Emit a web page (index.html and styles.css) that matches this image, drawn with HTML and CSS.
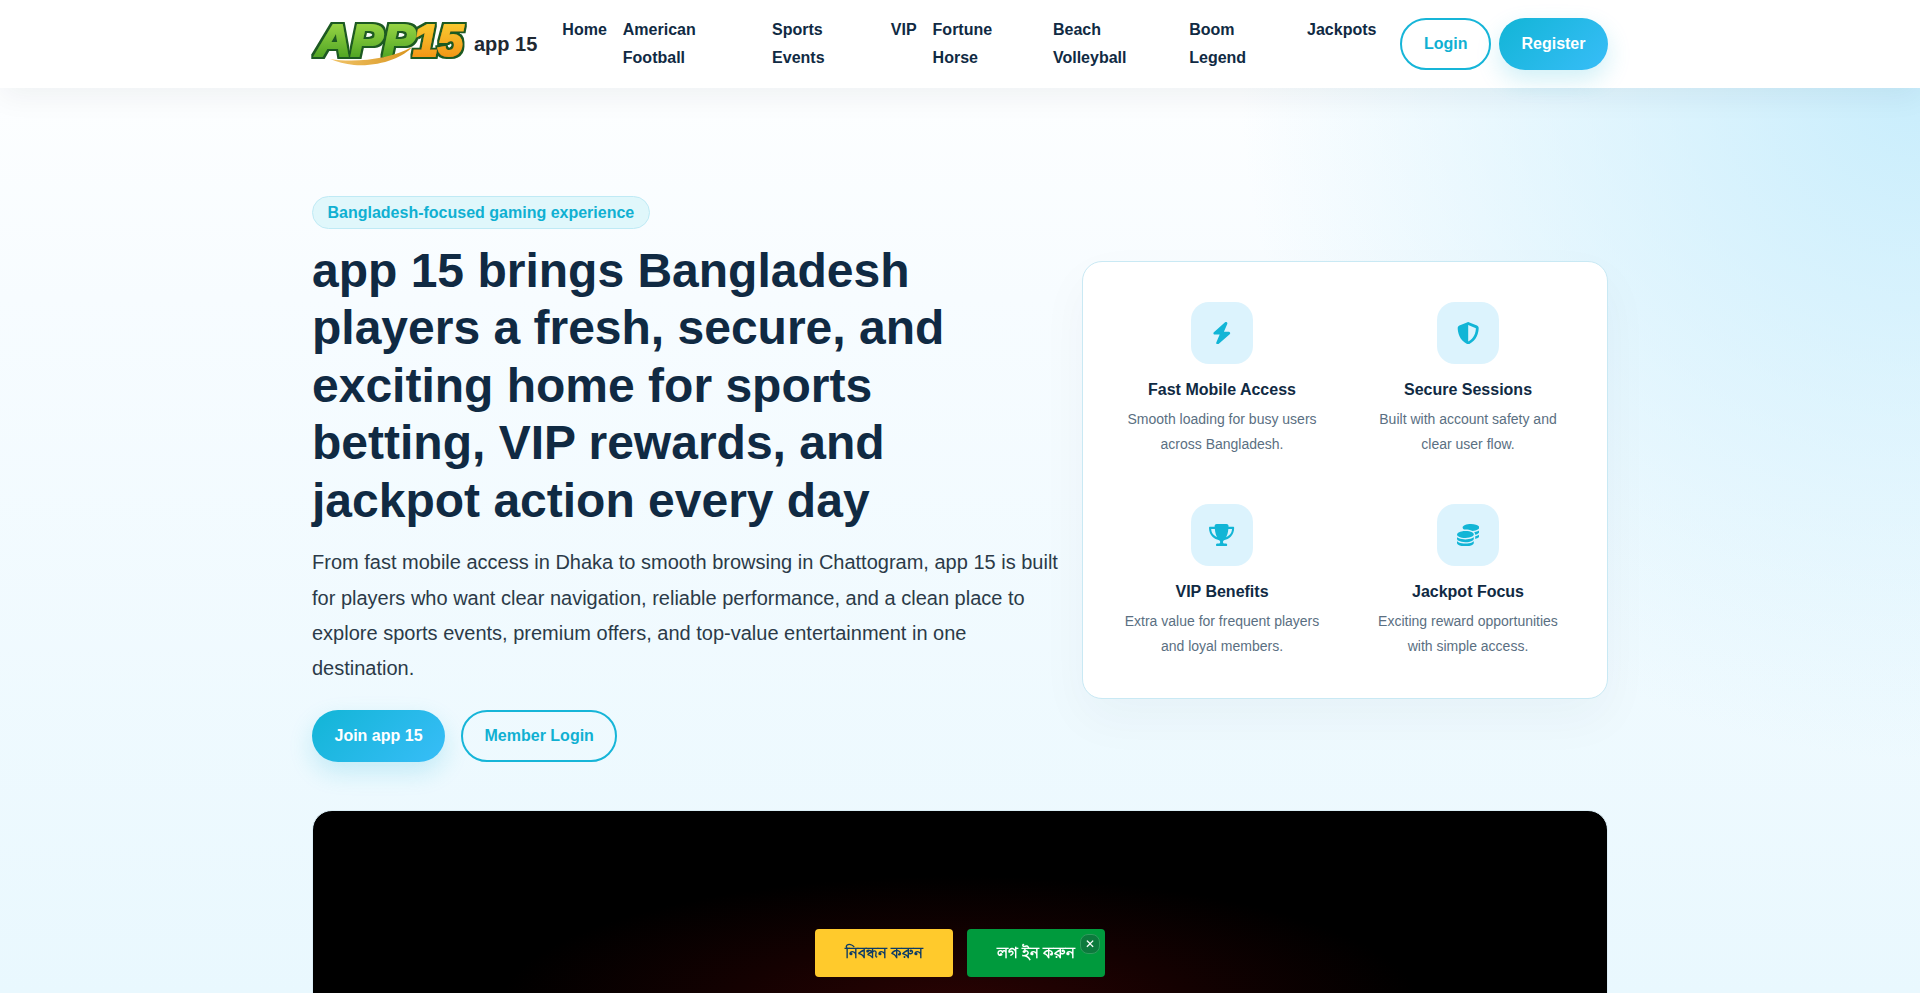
FILE: index.html
```html
<!DOCTYPE html>
<html lang="en">
<head>
  <meta charset="UTF-8" />
  <meta name="viewport" content="width=device-width, initial-scale=1.0"/>
  <title>app 15</title>
  <link rel="stylesheet" href="styles.css">
</head>
<body>
  <header class="site-header">
    <div class="container header-row">
      <a class="brand" href="#">
        <svg class="brand-logo" viewBox="0 0 154 44" width="154" height="44">
          <defs>
            <linearGradient id="logo-green" x1="0" y1="0" x2="0" y2="1">
              <stop offset="0" stop-color="#a8e04c"/>
              <stop offset="1" stop-color="#3f9a1c"/>
            </linearGradient>
            <linearGradient id="logo-orange" x1="0" y1="0" x2="0" y2="1">
              <stop offset="0" stop-color="#fbd636"/>
              <stop offset="1" stop-color="#f18a10"/>
            </linearGradient>
            <linearGradient id="logo-swoosh" x1="0" y1="0" x2="1" y2="0">
              <stop offset="0" stop-color="#f0c46a"/>
              <stop offset="1" stop-color="#d9951e"/>
            </linearGradient>
            <filter id="logo-outline" x="-5%" y="-10%" width="110%" height="120%">
              <feMorphology in="SourceAlpha" operator="dilate" radius="1.6" result="fat"/>
              <feFlood flood-color="#1d5a20"/>
              <feComposite in2="fat" operator="in" result="edge"/>
              <feMerge>
                <feMergeNode in="edge"/>
                <feMergeNode in="SourceGraphic"/>
              </feMerge>
            </filter>
          </defs>
          <g filter="url(#logo-outline)">
            <text class="logo-letters" x="4" y="34" fill="url(#logo-green)" stroke="url(#logo-green)" textLength="99" lengthAdjust="spacingAndGlyphs">APP</text>
            <text class="logo-letters" x="101" y="34" fill="url(#logo-orange)" stroke="url(#logo-orange)" textLength="50" lengthAdjust="spacingAndGlyphs">15</text>
          </g>
          <path d="M18 37 C45 41 78 37 100 25 C92 35 68 45 42 43 C33 42 25 40 18 37 Z" fill="url(#logo-swoosh)"/>
        </svg>
        <span>app 15</span>
      </a>
      <nav class="main-nav">
        <a href="#">Home</a>
        <a href="#">American Football</a>
        <a href="#">Sports Events</a>
        <a href="#">VIP</a>
        <a href="#">Fortune Horse</a>
        <a href="#">Beach Volleyball</a>
        <a href="#">Boom Legend</a>
        <a href="#">Jackpots</a>
      </nav>
      <div class="header-actions">
        <a class="btn btn-outline" href="#">Login</a>
        <a class="btn btn-solid" href="#">Register</a>
      </div>
    </div>
  </header>

  <main class="container">
    <section class="hero">
      <div class="hero-copy">
        <span class="hero-badge">Bangladesh-focused gaming experience</span>
        <h1>app 15 brings Bangladesh players a fresh, secure, and exciting home for sports betting, VIP rewards, and jackpot action every day</h1>
        <p>From fast mobile access in Dhaka to smooth browsing in Chattogram, app 15 is built for players who want clear navigation, reliable performance, and a clean place to explore sports events, premium offers, and top-value entertainment in one destination.</p>
        <div class="hero-actions">
          <a class="btn btn-solid" href="#">Join app 15</a>
          <a class="btn btn-outline" href="#">Member Login</a>
        </div>
      </div>

      <div class="feature-card">
        <div class="feature">
          <div class="feature-icon">
            <svg viewBox="0 0 448 512"><path d="M349.4 44.6c5.9-13.7 1.5-29.7-10.6-38.5s-28.6-8-39.9 1.8l-256 224c-10 8.8-13.6 22.9-8.9 35.3S50.7 288 64 288H175.5L98.6 467.4c-5.9 13.7-1.5 29.7 10.6 38.5s28.6 8 39.9-1.8l256-224c10-8.8 13.6-22.9 8.9-35.3s-16.6-20.7-30-20.7H272.5L349.4 44.6z"/></svg>
          </div>
          <h3>Fast Mobile Access</h3>
          <p>Smooth loading for busy users across Bangladesh.</p>
        </div>
        <div class="feature">
          <div class="feature-icon">
            <svg viewBox="0 0 512 512"><path d="M256 0c4.6 0 9.2 1 13.4 2.9L457.7 82.8c22 9.3 38.4 31 38.3 57.2c-.5 99.2-41.3 280.7-213.6 363.2c-16.7 8-36.1 8-52.8 0C57.3 420.7 16.5 239.2 16 140c-.1-26.2 16.3-47.9 38.3-57.2L242.7 2.9C246.8 1 251.4 0 256 0zm0 66.8V444.8C394 378 431.1 230.1 432 141.4L256 66.8l0 0z"/></svg>
          </div>
          <h3>Secure Sessions</h3>
          <p>Built with account safety and clear user flow.</p>
        </div>
        <div class="feature">
          <div class="feature-icon">
            <svg viewBox="0 0 576 512"><path d="M400 0H176c-26.5 0-48.1 21.8-47.1 48.2c.2 5.3 .4 10.6 .7 15.8H24C10.7 64 0 74.7 0 88c0 92.6 33.5 157 78.5 200.7c44.3 43.1 98.3 64.8 138.1 75.8c23.4 6.5 39.4 26 39.4 45.6c0 20.9-17 37.9-37.9 37.9H192c-17.7 0-32 14.3-32 32s14.3 32 32 32H384c17.7 0 32-14.3 32-32s-14.3-32-32-32H357.9C337 448 320 431 320 410.1c0-19.6 15.9-39.2 39.4-45.6c39.9-11 93.9-32.7 138.2-75.8C542.5 245 576 180.6 576 88c0-13.3-10.7-24-24-24H446.4c.3-5.2 .5-10.4 .7-15.8C448.1 21.8 426.5 0 400 0zM48.9 112h84.4c9.1 90.1 29.2 150.3 51.9 190.6c-24.9-11-50.8-26.5-73.2-48.3c-32-31.1-58-76-63-142.3zM464.1 254.3c-22.4 21.8-48.3 37.3-73.2 48.3c22.7-40.3 42.8-100.5 51.9-190.6h84.4c-5.1 66.3-31.1 111.2-63 142.3z"/></svg>
          </div>
          <h3>VIP Benefits</h3>
          <p>Extra value for frequent players and loyal members.</p>
        </div>
        <div class="feature">
          <div class="feature-icon">
            <svg viewBox="0 0 512 512"><path d="M512 80c0 18-14.3 34.6-38.4 48c-29.1 16.1-72.5 27.5-122.3 30.9c-3.7-1.8-7.4-3.5-11.3-5C300.6 137.4 248.2 128 192 128c-8.3 0-16.4 .2-24.5 .6l-1.1-.6C142.3 114.6 128 98 128 80c0-44.2 86-80 192-80S512 35.8 512 80zM160.7 161.1c10.2-.7 20.7-1.1 31.3-1.1c62.2 0 117.4 12.3 152.5 31.4C369.3 204.9 384 221.7 384 240c0 4-.7 7.9-2.1 11.7c-4.6 13.2-17 25.3-35 35.5c0 0 0 0 0 0c-.1 .1-.3 .1-.4 .2l0 0 0 0c-.3 .2-.6 .3-.9 .5c-35 19.4-90.8 32-153.6 32c-59.6 0-112.9-11.3-148.2-29.1c-1.9-.9-3.7-1.9-5.5-2.9C14.3 274.6 0 258 0 240c0-34.8 53.4-64.5 128-75.4c10.5-1.5 21.4-2.7 32.7-3.5zM416 240c0-21.9-10.6-39.9-24.1-53.4c28.3-4.4 54.2-11.4 76.2-20.5c16.3-6.8 31.5-15.2 43.9-25.5V176c0 19.3-16.5 37.1-43.8 50.9c-14.6 7.4-32.4 13.7-52.4 18.5c.1-1.8 .2-3.5 .2-5.3zm-32 96c0 18-14.3 34.6-38.4 48c-1.8 1-3.6 1.9-5.5 2.9C304.9 404.7 251.6 416 192 416c-62.8 0-118.6-12.6-153.6-32C14.3 370.6 0 354 0 336V300.6c12.5 10.3 27.6 18.7 43.9 25.5C83.4 342.6 135.8 352 192 352s108.6-9.4 148.1-25.9c7.8-3.2 15.3-6.9 22.4-10.9c6.1-3.4 11.8-7.2 17.2-11.2c1.5-1.1 2.9-2.3 4.3-3.4V304v5.7V336zm32 0V304 278.1c19-4.2 36.5-9.5 52.1-16c16.3-6.8 31.5-15.2 43.9-25.5V272c0 10.5-5 21-14.9 30.9c-16.3 16.3-45 29.7-81.3 38.4c.1-1.7 .2-3.5 .2-5.3zM192 448c56.2 0 108.6-9.4 148.1-25.9c16.3-6.8 31.5-15.2 43.9-25.5V432c0 44.2-86 80-192 80S0 476.2 0 432V396.6c12.5 10.3 27.6 18.7 43.9 25.5C83.4 438.6 135.8 448 192 448z"/></svg>
          </div>
          <h3>Jackpot Focus</h3>
          <p>Exciting reward opportunities with simple access.</p>
        </div>
      </div>
    </section>

    <section class="video-frame"></section>
  </main>

  <div class="sticky-cta">
    <a class="cta cta-register" href="#">নিবন্ধন করুন</a>
    <a class="cta cta-login" href="#">লগ ইন করুন</a>
    <button class="cta-close">✕</button>
  </div>
</body>
</html>
```

FILE: styles.css
```css
* {
  box-sizing: border-box;
}

html {
  height: 100%;
}

body {
  margin: 0;
  height: 100vh;
  overflow: hidden;
  font-family: "Liberation Sans", Arial, sans-serif;
  color: #212529;
  background:
    radial-gradient(circle at 100% 8%, #c8edfc 0, rgba(200, 237, 252, 0) 32%),
    linear-gradient(180deg, #ffffff 0, #f7fcff 30%, #e9f8fe 100%);
}

a {
  text-decoration: none;
  color: inherit;
}

.container {
  width: 1320px;
  margin: 0 auto;
  padding: 0 12px;
}

.site-header {
  background: #fff;
  height: 88px;
  box-shadow: 0 8px 30px rgba(13, 38, 59, 0.06);
}

.header-row {
  display: flex;
  align-items: center;
  height: 100%;
}

.brand {
  display: flex;
  align-items: center;
  gap: 8px;
  font-size: 20px;
  font-weight: 700;
  color: #1f2933;
  flex-shrink: 0;
  margin-right: 25px;
}

.brand-logo {
  display: block;
  overflow: visible;
}

.logo-letters {
  font-family: "Liberation Sans", sans-serif;
  font-size: 45px;
  font-weight: 700;
  font-style: italic;
  stroke-width: 2.2px;
}

.main-nav {
  display: flex;
  flex: 1;
  gap: 16px;
  font-size: 16px;
  font-weight: 700;
  line-height: 28px;
  color: #102a43;
  min-width: 0;
}

.header-actions {
  display: flex;
  gap: 8px;
  margin-left: 24px;
  flex-shrink: 0;
}

.btn {
  display: inline-flex;
  align-items: center;
  height: 52px;
  padding: 0 21.5px;
  border-radius: 26px;
  font-size: 16px;
  font-weight: 700;
}

.btn-outline {
  border: 2px solid #16b5d8;
  color: #10b0d2;
  background: transparent;
}

.btn-solid {
  padding: 0 22.5px;
  color: #fff;
  background: linear-gradient(135deg, #12b5d6, #38bdf8);
  box-shadow: 0 10px 25px rgba(18, 181, 214, 0.2);
}

.hero {
  display: grid;
  grid-template-columns: 746px 526px;
  gap: 24px;
  align-items: center;
  padding: 108px 0 48px;
}

.hero-badge {
  display: inline-block;
  height: 33px;
  padding: 0 14.5px;
  border: 1px solid #bfeaf5;
  border-radius: 17px;
  background: #e0f7fb;
  color: #10b0d2;
  font-size: 16px;
  font-weight: 700;
  line-height: 31px;
}

.hero h1 {
  margin: 12.5px 0 16px;
  font-size: 48px;
  font-weight: 700;
  line-height: 57.6px;
  color: #102a43;
}

.hero p {
  margin: 0 0 24px;
  font-size: 20px;
  line-height: 35.2px;
  color: #2b3a48;
}

.hero-actions {
  display: flex;
  gap: 16px;
}

.feature-card {
  display: grid;
  grid-template-columns: 1fr 1fr;
  column-gap: 16px;
  row-gap: 48px;
  margin-top: 2px;
  padding: 40px 24px;
  border: 1px solid #c9e9f4;
  border-radius: 20px;
  background: #fff;
  box-shadow: 0 20px 50px rgba(16, 42, 67, 0.04);
}

.feature {
  padding: 0 12px;
  text-align: center;
}

.feature-icon {
  display: flex;
  align-items: center;
  justify-content: center;
  width: 62px;
  height: 62px;
  margin: 0 auto 15px;
  border-radius: 18px;
  background: #dcf3fd;
}

.feature-icon svg {
  height: 22.4px;
  fill: #12b5d6;
}

.feature h3 {
  margin: 0 0 6px;
  font-size: 16px;
  font-weight: 700;
  line-height: 22px;
  color: #102a43;
}

.feature p {
  margin: 0;
  font-size: 14px;
  line-height: 24.5px;
  color: #5a6f82;
}

.video-frame {
  height: 400px;
  border-radius: 20px;
  border: 1px solid #dbeef6;
  background: radial-gradient(ellipse 460px 130px at 50% 195px, #2a0303 0, #140101 50%, #000 100%);
}

.sticky-cta {
  position: fixed;
  left: 815px;
  top: 929px;
  display: flex;
  gap: 14px;
}

.cta {
  display: flex;
  align-items: center;
  justify-content: center;
  width: 138px;
  height: 48px;
  border-radius: 4px;
  font-family: "Noto Sans", "Liberation Sans", sans-serif;
  font-size: 15px;
  font-weight: 700;
}

.cta-register {
  background: #ffca2c;
  color: #0d3b66;
}

.cta-login {
  background: #009a3d;
  color: #fff;
}

.cta-close {
  position: absolute;
  right: 5px;
  top: 5px;
  display: flex;
  align-items: center;
  justify-content: center;
  width: 20px;
  height: 20px;
  padding: 0;
  border: 1px solid #2f9b5c;
  border-radius: 8px;
  background: #0c7a3d;
  color: #fff;
  font-size: 12px;
}
```
